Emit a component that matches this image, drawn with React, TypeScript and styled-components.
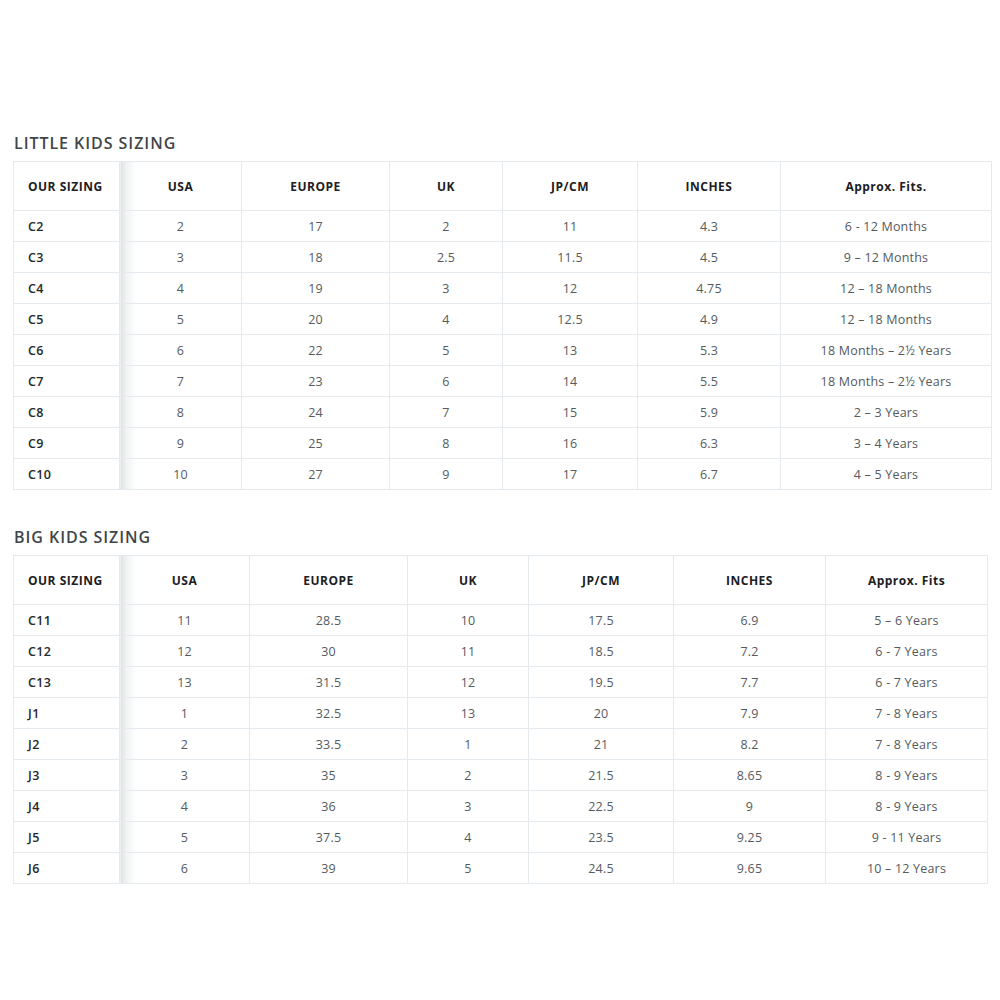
import { FC } from 'react'
import styled, { createGlobalStyle } from 'styled-components'

type SizeTable = {
	title: string
	widths: number[]
	headers: string[]
	rows: string[][]
}

const tables: SizeTable[] = [
	{
		title: 'LITTLE KIDS SIZING',
		widths: [106, 122, 148, 113, 135, 143, 211],
		headers: ['OUR SIZING', 'USA', 'EUROPE', 'UK', 'JP/CM', 'INCHES', 'Approx. Fits.'],
		rows: [
			['C2', '2', '17', '2', '11', '4.3', '6 - 12 Months'],
			['C3', '3', '18', '2.5', '11.5', '4.5', '9 – 12 Months'],
			['C4', '4', '19', '3', '12', '4.75', '12 – 18 Months'],
			['C5', '5', '20', '4', '12.5', '4.9', '12 – 18 Months'],
			['C6', '6', '22', '5', '13', '5.3', '18 Months – 2½ Years'],
			['C7', '7', '23', '6', '14', '5.5', '18 Months – 2½ Years'],
			['C8', '8', '24', '7', '15', '5.9', '2 – 3 Years'],
			['C9', '9', '25', '8', '16', '6.3', '3 – 4 Years'],
			['C10', '10', '27', '9', '17', '6.7', '4 – 5 Years'],
		],
	},
	{
		title: 'BIG KIDS SIZING',
		widths: [106, 130, 158, 121, 145, 152, 162],
		headers: ['OUR SIZING', 'USA', 'EUROPE', 'UK', 'JP/CM', 'INCHES', 'Approx. Fits'],
		rows: [
			['C11', '11', '28.5', '10', '17.5', '6.9', '5 – 6 Years'],
			['C12', '12', '30', '11', '18.5', '7.2', '6 - 7 Years'],
			['C13', '13', '31.5', '12', '19.5', '7.7', '6 - 7 Years'],
			['J1', '1', '32.5', '13', '20', '7.9', '7 - 8 Years'],
			['J2', '2', '33.5', '1', '21', '8.2', '7 - 8 Years'],
			['J3', '3', '35', '2', '21.5', '8.65', '8 - 9 Years'],
			['J4', '4', '36', '3', '22.5', '9', '8 - 9 Years'],
			['J5', '5', '37.5', '4', '23.5', '9.25', '9 - 11 Years'],
			['J6', '6', '39', '5', '24.5', '9.65', '10 – 12 Years'],
		],
	},
]

const SizingSection: FC<{ table: SizeTable }> = ({ table }) => (
	<Section>
		<Title>{table.title}</Title>
		<Table style={{ width: table.widths.reduce((a, b) => a + b, 0) }}>
			<colgroup>
				{table.widths.map((w, i) => (
					<col key={i} style={{ width: w }} />
				))}
			</colgroup>
			<thead>
				<tr>
					{table.headers.map((h, i) => (
						<HeadCell key={i} $first={i === 0} $shadow={i === 1}>
							{h}
						</HeadCell>
					))}
				</tr>
			</thead>
			<tbody>
				{table.rows.map((row, r) => (
					<tr key={r}>
						{row.map((v, i) => (
							<BodyCell key={i} $first={i === 0} $shadow={i === 1}>
								{v}
							</BodyCell>
						))}
					</tr>
				))}
			</tbody>
		</Table>
	</Section>
)

export default function App() {
	return (
		<>
			<GlobalStyle />
			<Page>
				{tables.map((t) => (
					<SizingSection key={t.title} table={t} />
				))}
			</Page>
		</>
	)
}

const GlobalStyle = createGlobalStyle`
	body {
		margin: 0;
		background: #fff;
		font-family: 'Open Sans', sans-serif;
	}
`

const Page = styled.div`
	width: 1000px;
	height: 1000px;
	padding: 133px 0 0 13px;
	box-sizing: border-box;
	display: flex;
	flex-direction: column;
	gap: 37px;
`

const Section = styled.section`
	display: flex;
	flex-direction: column;
	gap: 8px;
`

const Title = styled.h2`
	margin: 0 0 0 1px;
	font-family: 'Open Sans', sans-serif;
	font-size: 16px;
	line-height: 20px;
	font-weight: 600;
	letter-spacing: 0.95px;
	color: #3f4549;
`

const Table = styled.table`
	border-collapse: collapse;
	table-layout: fixed;
	border: 1px solid #e4eaee;
`

const shadow = 'linear-gradient(to right, #dcdfe1, #eff1f2 5px, #fff 16px)'

const cellBase = `
	border: 1px solid #e4eaee;
	text-align: center;
	padding: 0 8px;
	white-space: nowrap;
	font-family: 'Open Sans', sans-serif;
`

const HeadCell = styled.th<{ $first: boolean; $shadow: boolean }>`
	${cellBase}
	height: 48px;
	font-size: 12px;
	font-weight: 700;
	letter-spacing: 0.5px;
	color: #1c2023;
	text-align: ${(p) => (p.$first ? 'left' : 'center')};
	padding-left: ${(p) => (p.$first ? '14px' : '8px')};
	background: ${(p) => (p.$shadow ? shadow : '#fff')};
`

const BodyCell = styled.td<{ $first: boolean; $shadow: boolean }>`
	${cellBase}
	height: 30px;
	font-size: 12.5px;
	font-weight: ${(p) => (p.$first ? 600 : 400)};
	letter-spacing: ${(p) => (p.$first ? '0.4px' : '0.2px')};
	color: ${(p) => (p.$first ? '#23282b' : '#555a5e')};
	text-align: ${(p) => (p.$first ? 'left' : 'center')};
	padding-left: ${(p) => (p.$first ? '14px' : '8px')};
	background: ${(p) => (p.$shadow ? shadow : '#fff')};
`
